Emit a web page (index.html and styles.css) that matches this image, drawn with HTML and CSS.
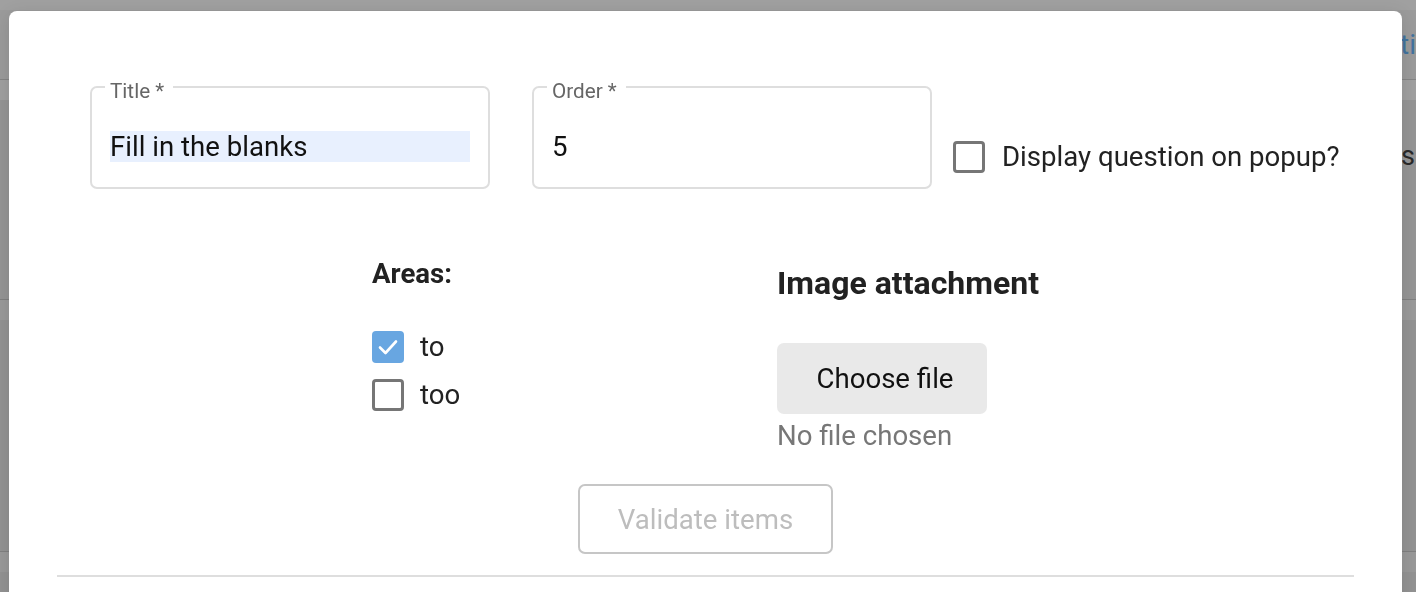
FILE: index.html
```html
<!DOCTYPE html>
<html lang="en">
<head>
<meta charset="utf-8">
<title>Question editor</title>
<link rel="stylesheet" href="styles.css">
</head>
<body>
  <div class="page">
    <div class="page-top"></div>
    <div class="page-row row-a"><span class="page-link">ti</span></div>
    <div class="page-row row-b"></div>
    <div class="page-row row-c"><span class="page-text">Items</span></div>
    <div class="page-row row-d"></div>
    <div class="page-row row-e"></div>
    <div class="page-row row-f"></div>
    <div class="page-row row-g"></div>
  </div>

  <div class="modal" role="dialog">
    <div class="top-row">
      <fieldset class="field">
        <legend>Title *</legend>
        <input class="field-input autofill" type="text" value="Fill in the blanks">
      </fieldset>
      <fieldset class="field">
        <legend>Order *</legend>
        <input class="field-input" type="text" value="5">
      </fieldset>
      <label class="check popup-check">
        <span class="box"></span>
        <span class="check-text">Display question on popup?</span>
      </label>
    </div>

    <div class="middle-row">
      <div class="areas">
        <h4 class="areas-title">Areas:</h4>
        <div class="area-list">
          <label class="check area">
            <span class="box checked">
              <svg viewBox="0 0 32 32" width="32" height="32"><path d="M8 16.5 L13.5 22 L24 10.5" fill="none" stroke="#fff" stroke-width="2.6" stroke-linecap="round" stroke-linejoin="round"/></svg>
            </span>
            <span class="check-text">to</span>
          </label>
          <label class="check area">
            <span class="box"></span>
            <span class="check-text">too</span>
          </label>
        </div>
      </div>
      <div class="attachment">
        <h3 class="attachment-title">Image attachment</h3>
        <button class="file-btn" type="button">Choose file</button>
        <div class="file-status">No file chosen</div>
      </div>
    </div>

    <div class="validate-row">
      <button class="validate-btn" type="button" disabled>Validate items</button>
    </div>

    <hr class="divider">
  </div>
</body>
</html>
```

FILE: styles.css
```css
* { box-sizing: border-box; }

html, body {
  margin: 0;
  padding: 0;
  height: 100%;
  overflow: hidden;
}

body {
  background: #959595;
  font-family: Roboto, "Liberation Sans", Arial, sans-serif;
}

/* ---------- background page (dimmed) ---------- */
.page {
  display: flex;
  flex-direction: column;
}

.page-top {
  height: 10px;
  background: #a0a0a0;
}

.page-row {
  display: flex;
  align-items: center;
  overflow: hidden;
  white-space: nowrap;
}

.row-a {
  height: 70px;
  background: #9b9b9b;
  border-bottom: 1px solid #858585;
  padding-left: 1400px;
}

.page-link {
  font-size: 28px;
  color: #42739f;
}

.row-b {
  height: 20px;
  background: #a0a0a0;
}

.row-c {
  height: 200px;
  background: #959595;
  border-bottom: 1px solid #808080;
  align-items: flex-start;
  justify-content: flex-end;
}

.page-text {
  font-size: 27px;
  color: #2a2a2a;
  margin-top: 40px;
  margin-right: 1px;
}

.row-d {
  height: 20px;
  background: #9a9a9a;
}

.row-e {
  height: 232px;
  background: #939393;
  border-bottom: 1px solid #808080;
}

.row-f {
  height: 20px;
  background: #999999;
}

.row-g {
  height: 60px;
  background: #939393;
}

/* ---------- modal ---------- */
.modal {
  position: fixed;
  top: 11px;
  left: 9px;
  width: 1393px;
  height: 640px;
  background: #ffffff;
  border-radius: 8px;
  padding: 61px 48px 0;
  box-shadow: 0 4px 18px rgba(0, 0, 0, 0.12);
}

.top-row {
  display: flex;
  align-items: flex-start;
  padding-left: 33px;
  gap: 42px;
}

.field {
  width: 400px;
  margin: 0;
  padding: 29px 18px 25px;
  border: 2px solid #dedede;
  border-radius: 7px;
  min-width: 0;
}

.field legend {
  font-size: 20.7px;
  line-height: 22px;
  color: #666666;
  padding: 8px 9px 0 5px;
  margin-left: -5px;
}

.field-input {
  display: block;
  width: 360px;
  height: 31px;
  border: 0;
  padding: 0;
  margin: 0;
  outline: none;
  font-family: Roboto, "Liberation Sans", Arial, sans-serif;
  font-size: 27.6px;
  color: #111111;
  background: transparent;
}

.field-input.autofill {
  background: #e8f0fe;
}

.check {
  display: flex;
  align-items: center;
  gap: 16px;
  font-size: 27.6px;
  color: #222222;
  line-height: 32px;
}

.popup-check {
  margin-top: 69px;
  margin-left: -21px;
  gap: 17px;
}

.box {
  width: 32px;
  height: 32px;
  flex: none;
  border: 3px solid #767676;
  border-radius: 4px;
  background: #fff;
  display: flex;
}

.box.checked {
  border: 0;
  background: #68a6e1;
}

.box svg {
  display: block;
}

/* ---------- middle ---------- */
.middle-row {
  display: flex;
  justify-content: center;
  margin-top: 70px;
}

.areas {
  width: 405px;
}

.areas-title {
  margin: 0;
  font-size: 27.6px;
  line-height: 30px;
  font-weight: 700;
  color: #222222;
}

.area-list {
  margin-top: 34px;
  display: flex;
  flex-direction: column;
}

.area {
  height: 48px;
}

.attachment {
  display: flex;
  flex-direction: column;
  align-items: flex-start;
}

.attachment-title {
  margin: 9px 0 0;
  font-size: 32px;
  line-height: 30px;
  font-weight: 700;
  color: #222222;
}

.file-btn {
  margin-top: 45px;
  width: 210px;
  height: 71px;
  border: 0;
  border-radius: 7px;
  background: #e9e9e9;
  font-family: Roboto, "Liberation Sans", Arial, sans-serif;
  font-size: 27.6px;
  color: #111111;
  padding: 0 0 0 6px;
}

.file-status {
  margin-top: 7px;
  font-size: 27.6px;
  line-height: 30px;
  color: #777777;
}

/* ---------- validate ---------- */
.validate-row {
  display: flex;
  justify-content: center;
  margin-top: 33px;
}

.validate-btn {
  width: 255px;
  height: 70px;
  border: 2px solid #c6c6c6;
  border-radius: 7px;
  background: #ffffff;
  font-family: Roboto, "Liberation Sans", Arial, sans-serif;
  font-size: 27.6px;
  color: #bdbdbd;
  padding: 0;
}

.divider {
  margin: 21px 0 0;
  border: 0;
  height: 2px;
  background: #dedede;
}
```
